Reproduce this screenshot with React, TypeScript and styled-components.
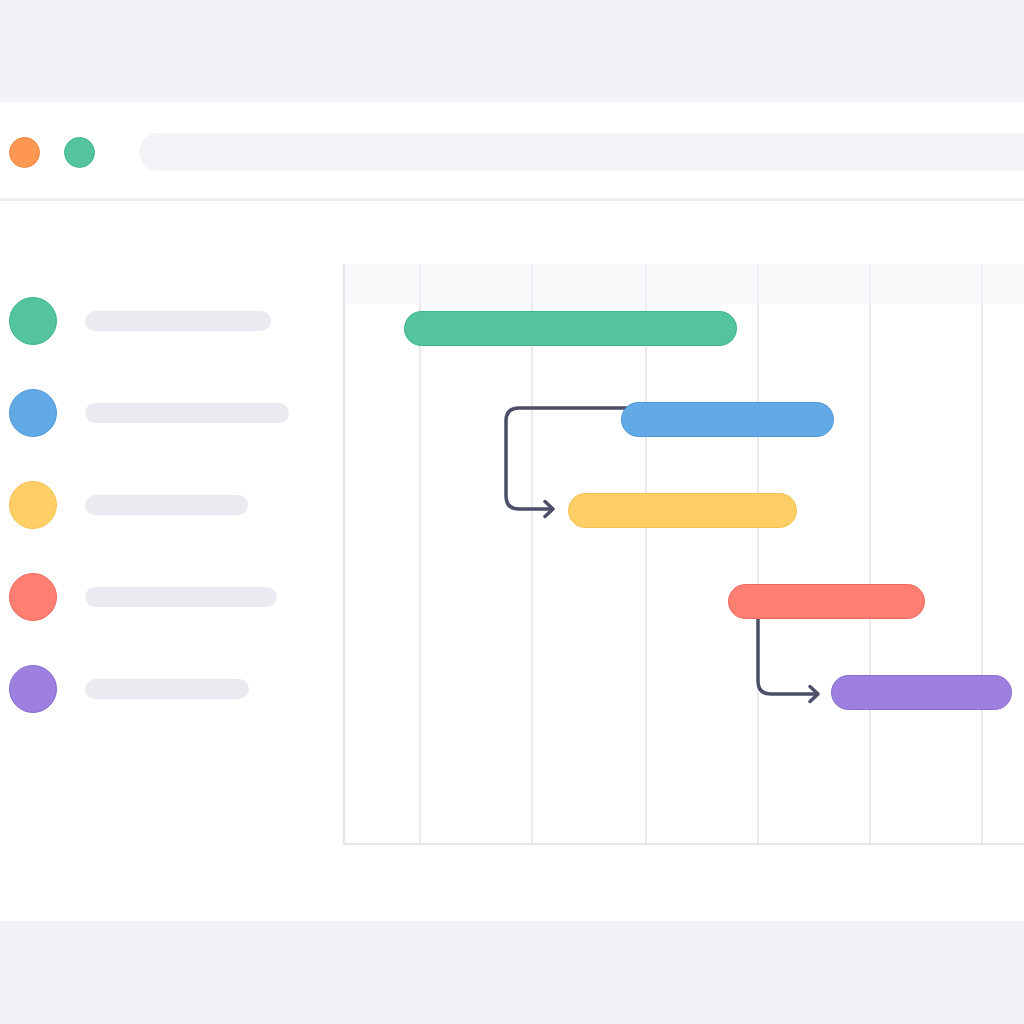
import React from 'react';
import styled, { createGlobalStyle } from 'styled-components';

interface Task {
  color: string;
  edge: string;
  label: number;
  start: number;
  width: number;
}

const tasks: Task[] = [
  { color: '#53c49b', edge: '#3fb48a', label: 186, start: 59, width: 333 },
  { color: '#62aae6', edge: '#4e98d8', label: 204, start: 276, width: 213 },
  { color: '#ffcf65', edge: '#f5c152', label: 163, start: 223, width: 229 },
  { color: '#fe7f72', edge: '#f0685c', label: 192, start: 383, width: 197 },
  { color: '#9d7fdf', edge: '#8a6bd2', label: 164, start: 486, width: 181 },
];

const columns = [76, 112, 114, 112, 112, 112, 112];

const Gantt = () => {
  return (
    <Page>
      <GlobalStyle />
      <Window>
        <TitleBar>
          <Dot color='#fd9752' edge='#f0843d' />
          <Dot color='#53c49b' edge='#3fb48a' />
          <AddressBar />
        </TitleBar>
        <Body>
          <TaskList>
            {tasks.map((t, i) => (
              <TaskRow key={i}>
                <Avatar color={t.color} edge={t.edge} />
                <Label style={{ width: t.label }} />
              </TaskRow>
            ))}
          </TaskList>
          <Chart>
            <Columns>
              {columns.map((w, i) => (
                <Column key={i} style={{ width: w }} />
              ))}
            </Columns>
            <HeaderBand />
            <Links viewBox='0 0 700 579' width='700' height='579'>
              <path d='M 300 144 H 176 Q 163 144 163 157 V 232 Q 163 245 176 245 H 209' />
              <path d='M 202 237.5 L 210 245 L 202 252.5' />
              <path d='M 415 340 V 417 Q 415 430 428 430 H 474' />
              <path d='M 467 422.5 L 475 430 L 467 437.5' />
            </Links>
            <Rows>
              {tasks.map((t, i) => (
                <Row key={i}>
                  <Bar color={t.color} edge={t.edge} style={{ left: t.start, width: t.width }} />
                </Row>
              ))}
            </Rows>
          </Chart>
        </Body>
      </Window>
    </Page>
  );
};

const GlobalStyle = createGlobalStyle`
  html, body {
    margin: 0;
    padding: 0;
    background: #f0f2f5;
    font-family: Inter, "Noto Sans", sans-serif;
  }
`;

const Page = styled.div`
  width: 1024px;
  height: 1024px;
  padding-top: 102px;
  box-sizing: border-box;
  overflow: hidden;
`;

const Window = styled.div`
  height: 819px;
  background: #ffffff;
  overflow: hidden;
`;

const TitleBar = styled.div`
  display: flex;
  align-items: center;
  height: 99px;
  padding: 4px 0 0 9px;
  box-sizing: border-box;
  border-bottom: 3px solid #eceef1;
`;

const Dot = styled.div<{ color: string; edge: string }>`
  flex: none;
  width: 31px;
  height: 31px;
  border-radius: 50%;
  background: ${(p) => p.color};
  border: 1px solid ${(p) => p.edge};
  box-sizing: border-box;
  margin-right: 24px;
`;

const AddressBar = styled.div`
  flex: none;
  width: 920px;
  height: 38px;
  margin-left: 20px;
  border-radius: 19px;
  background: #f1f3f6;
`;

const Body = styled.div`
  display: flex;
  align-items: flex-start;
`;

const TaskList = styled.div`
  display: flex;
  flex-direction: column;
  gap: 44px;
  flex: 0 0 343px;
  padding: 96px 0 0 9px;
  box-sizing: border-box;
`;

const TaskRow = styled.div`
  display: flex;
  align-items: center;
  gap: 28px;
  height: 48px;
`;

const Avatar = styled.div<{ color: string; edge: string }>`
  flex: none;
  width: 48px;
  height: 48px;
  border-radius: 50%;
  background: ${(p) => p.color};
  border: 1px solid ${(p) => p.edge};
  box-sizing: border-box;
`;

const Label = styled.div`
  height: 20px;
  border-radius: 10px;
  background: #e9ebf0;
`;

const Chart = styled.div`
  position: relative;
  flex: 0 0 700px;
  height: 579px;
  margin-top: 63px;
  border-left: 2px solid #e4e6ea;
  border-bottom: 2px solid #e4e6ea;
`;

const Columns = styled.div`
  position: absolute;
  inset: 0;
  display: flex;
`;

const Column = styled.div`
  flex: none;
  height: 100%;
  border-right: 2px solid #e8eaee;
  box-sizing: border-box;
`;

const HeaderBand = styled.div`
  position: relative;
  height: 40px;
  background: rgba(244, 246, 249, 0.7);
`;

const Rows = styled.div`
  position: relative;
  display: flex;
  flex-direction: column;
  gap: 55px;
  padding-top: 7px;
`;

const Row = styled.div`
  position: relative;
  height: 36px;
`;

const Bar = styled.div<{ color: string; edge: string }>`
  position: absolute;
  top: 0;
  height: 35px;
  border-radius: 18px;
  background: ${(p) => p.color};
  border: 1px solid ${(p) => p.edge};
  box-sizing: border-box;
`;

const Links = styled.svg`
  position: absolute;
  left: -2px;
  top: 0;
  fill: none;
  stroke: #4b4f69;
  stroke-width: 3.5;
  stroke-linecap: round;
  stroke-linejoin: round;
  pointer-events: none;
`;

export default Gantt;
